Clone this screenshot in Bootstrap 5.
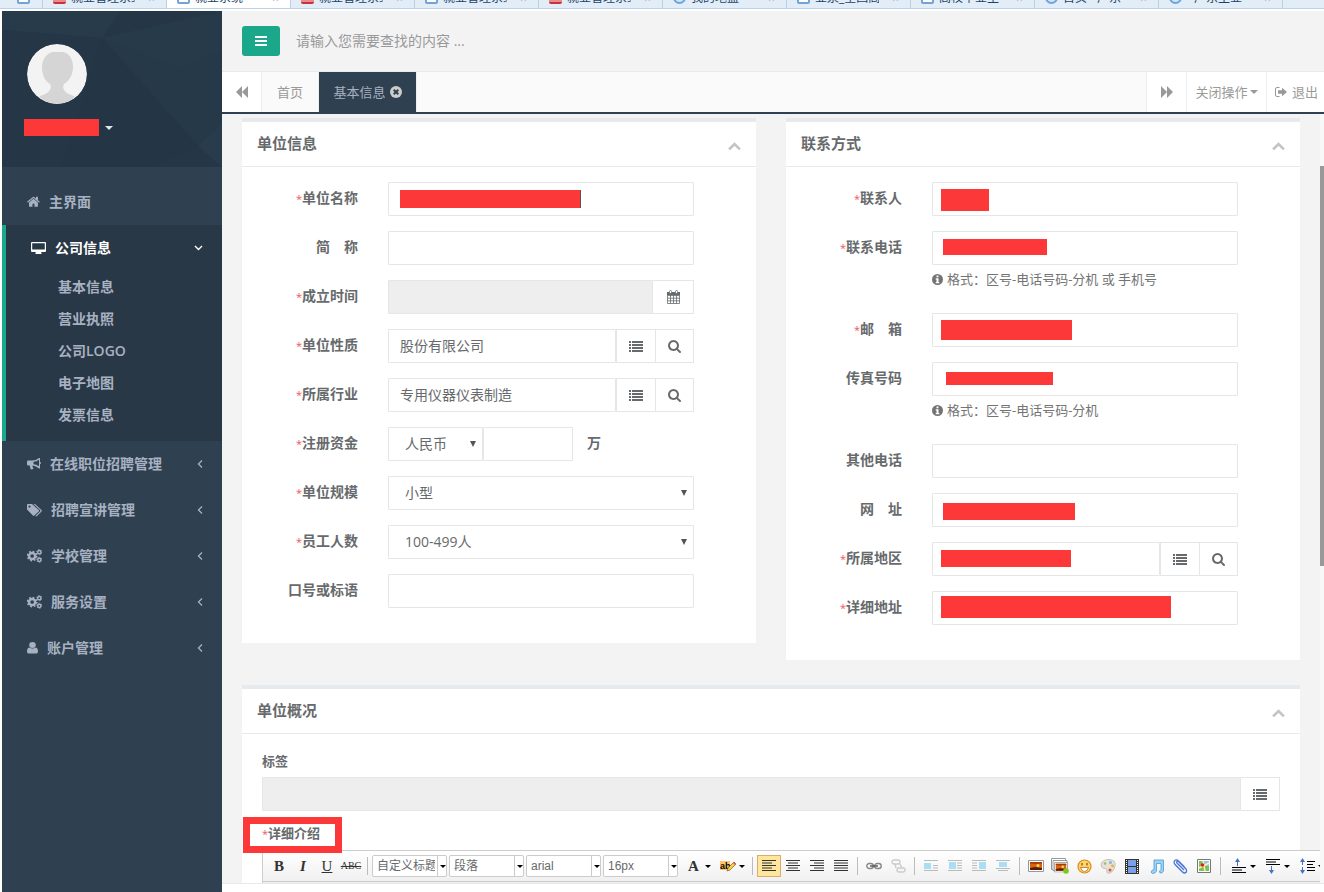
<!DOCTYPE html>
<html lang="zh-CN">
<head>
<meta charset="utf-8">
<meta name="viewport" content="width=device-width, initial-scale=1">
<title>基本信息</title>
<link href="https://cdn.jsdelivr.net/npm/bootstrap@5.3.0/dist/css/bootstrap.min.css" rel="stylesheet">
<style>
:root{--ink:#676a6c;--line:#e7eaec;--box:#e5e6e7;--navy:#2f4050;--deep:#293846;--soft:#a7b1c2;--red:#fc3938}
html,body{height:100%}
body{font:14px/20px "Open Sans","Noto Sans CJK SC",sans-serif;color:var(--ink);background:#fff;overflow:hidden}
a{color:inherit;text-decoration:none}
svg{display:block;flex:none}
.ico{fill:currentColor}
.shell{padding-left:2px}
/* browser strip */
.strip{height:9px;background:#e2edf8;border-bottom:1px solid #b9d3ec;margin-bottom:2px;color:#1c4468;font-size:12px;line-height:16px}
.strip .tabx{flex:0 0 124px;height:8px;padding:0 6px 0 10px;gap:5px;border-right:1px solid #b9cfe6}
.strip .tabx:first-child{flex-basis:43px;padding-left:17px}
.strip .tabx span{margin-bottom:2px;white-space:nowrap;overflow:hidden;width:64px;height:16px}
.strip .tabx i{flex:none;width:13px;height:10px;margin-bottom:4px;border:2px solid #6fa3da;border-radius:2px;background:#fff}
.strip .tabx i.hot{border:0;border-bottom:2px solid #c8323a;background:#e88b8b}
.strip .tabx i.ball{border-radius:7px;height:13px;background:#cfe6fa}
.strip .tabx b{font-weight:400;color:#9fbdda;margin-bottom:1px;margin-left:8px}
.strip .tabx.on{background:#fff}
/* sidebar */
.side{flex:0 0 220px;background:var(--navy);color:var(--soft);font-weight:600}
.who{height:156px;padding:33px 25px 0;background:#253746}
.who .poly{position:absolute;inset:0;width:100%;height:100%}
.who .face{position:relative;border-radius:50%}
.who .name{position:relative;margin:15px 0 0 -3px;gap:6px;padding:0;border:0;background:none;color:#dfe4ed}
.who .name span{width:75px;height:17px;background:var(--red)}
.menu{padding-top:12px}
.menu>li>a{height:46px;padding:0 19px 0 25px;gap:9px}
.menu>li.on{background:var(--deep);border-left:4px solid #19aa8d;padding-bottom:10px}
.menu>li.on>a{color:#fff}
.menu ul a{display:block;line-height:32px;padding-left:52px}
/* header */
.topbar{height:60px;background:#f3f3f4;padding:0 20px;gap:16px}
.topbar .btn{width:38px;height:30px;background:#1aa78a;color:#fff;border:0;border-radius:3px}
.topbar input{border:0;background:none;flex:1;padding:0;outline:0;color:var(--ink)}
.topbar input::placeholder{color:#999}
.pages{height:43px;background:#fafafa;border-top:1px solid var(--line);border-bottom:2px solid var(--navy);color:#999;font-size:13px}
.pages button,.pages a{border:0;border-right:1px solid #eee;background:#fff;color:inherit;height:40px;padding:0;justify-content:center}
.pages .sq{width:40px}
.pages .home{width:57px;background:#fafafa}
.pages .cur{width:98px;background:var(--navy);color:var(--soft);gap:4px}
.pages .rt{border-right:0;border-left:1px solid #eee}
.pages .ops{width:80px;gap:2px}
.pages .quit{width:58px;gap:5px;padding-left:2px}
.caret{width:0;height:0;border:4px solid transparent;border-top-color:currentColor;border-bottom:0}
/* panels */
.work{background:#f3f3f4;padding:4px 20px 0;overflow:hidden}
.rail{flex:0 0 4px;background:#f8f8f8}
.rail div{margin-top:52px;height:52%;background:#999}
.duo{--bs-gutter-x:30px}
.panel{background:#fff;border-top:4px solid var(--line);margin-bottom:25px}
.panel header{height:45px;border-bottom:1px solid var(--line);padding:0 15px}
.panel h2{font-size:15px;line-height:20px;font-weight:600;margin:0 0 2px}
.panel header button{border:0;background:none;padding:4px 0 0;color:#c4c4c4}
.panel .inner{padding:15px 20px 20px}
.panel .row{--bs-gutter-x:30px;margin-bottom:15px}
.lab{text-align:right;line-height:32px;font-weight:600;white-space:nowrap}
.star{color:#ed5565;font-weight:400;font-size:11px}
.fld{display:block;width:100%;height:34px;border:1px solid var(--box);border-radius:1px;background:#fff;color:var(--ink);padding:0 11px 2px;outline:0;font-size:14px}
.fld.off{background:#eee}
select.fld,.combo{appearance:none;-webkit-appearance:none;background:#fff url("data:image/svg+xml,%3Csvg xmlns='http://www.w3.org/2000/svg' width='6' height='6'%3E%3Cpath d='M0 0h6L3 6z' fill='%23555'/%3E%3C/svg%3E") no-repeat right 6px center}
select.fld{padding:0 16px}
.sq2{flex:none;height:34px;border:1px solid var(--box);border-left:0;background:#fff;color:var(--ink);padding:0;display:flex;align-items:center;justify-content:center;width:39px}
.sq2.near{border-left:1px solid var(--box);width:40px}
.sq2.near+.sq2{width:38px}
.sq2.cal{width:41px}
.cash{flex:0 0 95px}
.sum{flex:0 0 90px}
.unit{padding-left:14px}
.hint{font-size:13px;line-height:18px;margin:5px 0 10px;gap:4px;color:#737373;white-space:nowrap}
/* masks over private values */
.mask{position:absolute;background:var(--red);left:24px;top:7px;height:20px}
.m-firm{left:27px;width:181px;height:18px;top:8px;border-right:1px solid #555}
.m-man{width:48px;height:22px}
.m-tel{left:26px;top:8px;width:104px;height:16px}
.m-mail{width:131px}
.m-fax{left:29px;top:10px;width:107px;height:13px}
.m-web{left:26px;top:10px;width:132px;height:17px}
.m-area{width:130px;top:8px;height:17px}
.m-addr{width:230px;top:5px;height:22px}
/* overview */
.tag{font-size:13px;font-weight:600;line-height:24px;display:block;margin-bottom:4px}
.detail{font-size:13px;font-weight:600;line-height:22px;margin:11px 0 5px}
.detail .ring{position:absolute;left:-19px;top:-5px;width:99px;height:36px;border:7px solid var(--red);z-index:2;pointer-events:none}
.editor{width:max-content;border:1px solid #ccc;border-right:0;background:#eee;height:60px}
.tools{height:31px;padding:0 30px 0 4px;border-bottom:1px solid #ccc;background:linear-gradient(#fff,#f0f0f0)}
.tools button{width:24px;height:22px;padding:0;border:1px solid transparent;background:none;color:#333;justify-content:center;flex:none}
.tools button.split{width:34px;gap:3px;padding-left:2px}
.tools button.split .caret{border-width:3px;border-bottom:0;color:#000}
.tools button.on{background:#ffe69f;border-color:#dcac6c}
.tools hr{width:1px;height:18px;margin:0 4px;background:#bcbcbc;border:0;opacity:1;flex:none}
.tools .type{font:bold 15px/20px "Liberation Serif",serif}
.tools .type span{width:16px}
.tools .abc{font-size:10px;font-weight:400;text-decoration:line-through}
.combo{width:75px;height:22px;margin-right:2px;border:1px solid #ccc;border-radius:2px;padding:0 11px 0 4px;color:var(--ink);font:12px/20px "Liberation Sans","Noto Sans CJK SC",sans-serif;outline:0;background-image:url("data:image/svg+xml,%3Csvg xmlns='http://www.w3.org/2000/svg' width='9' height='20'%3E%3Cpath d='M0 0h1v20H0z' fill='%23ccc'/%3E%3Cpath d='M3 9h6l-3 3z'/%3E%3C/svg%3E");background-position:right center}
.foot{height:9px;border-top:1px solid var(--line);background:#fff}
</style>
</head>
<body class="d-flex flex-column">
<svg width="0" height="0" class="position-absolute" aria-hidden="true">
<symbol id="search" viewBox="60 120 1672 1672"><path d="M1216 832q0-185-131.500-316.500t-316.500-131.500-316.500 131.500-131.500 316.500 131.500 316.500 316.500 131.500 316.500-131.500 131.500-316.500zm512 832q0 52-38 90t-90 38q-54 0-90-38l-343-342q-179 124-399 124-143 0-273.500-55.500t-225-150-150-225-55.500-273.500 55.500-273.500 150-225 225-150 273.500-55.500 273.500 55.500 225 150 150 225 55.500 273.500q0 220-124 399l343 343q37 37 37 90z"/></symbol>
<symbol id="list" viewBox="0 0 14 11"><path d="M0 0h2v2H0zM3 0h11v2H3zM0 3h2v2H0zM3 3h11v2H3zM0 6h2v2H0zM3 6h11v2H3zM0 9h2v2H0zM3 9h11v2H3z"/></symbol>
<symbol id="cogs" viewBox="0 .2 14.600 13.600"><g fill="none" stroke="currentColor"><circle cx="5" cy="7" r="3" stroke-width="2.400"/><circle cx="5" cy="7" r="4.500" stroke-width="1.500" stroke-dasharray="1.760 1.760"/><circle cx="12" cy="3.300" r="1.600" stroke-width="1.400"/><circle cx="12" cy="3.300" r="2.500" stroke-width=".9" stroke-dasharray="1.300 1.300"/><circle cx="12" cy="10.700" r="1.600" stroke-width="1.400"/><circle cx="12" cy="10.700" r="2.500" stroke-width=".9" stroke-dasharray="1.300 1.300"/></g></symbol>
<symbol id="left" viewBox="0 0 6 10"><path d="M5 1.500 1.500 5 5 8.500" fill="none" stroke="currentColor" stroke-width="1.300"/></symbol>
<symbol id="up" viewBox="0 0 12 8"><path d="M1 6.700 6 1.700l5 5" fill="none" stroke="currentColor" stroke-width="2.400"/></symbol>
<symbol id="info" viewBox=".5 .5 11 11"><path fill-rule="evenodd" d="M6 .5a5.500 5.500 0 1 0 0 11 5.500 5.500 0 0 0 0-11zM5 2h2v1.800H5zM4.200 4.800H7v3.700h.8v1.200H4.200V8.500H5V6h-.8z"/></symbol>
<symbol id="pic" viewBox="0 0 16 12"><path d="M.5.500h15v11H.5z" fill="#fff" stroke="#999"/><path d="M2 2h12v8H2z" fill="#d9640f"/><path d="M2 2h12v1.500L8 4 2 3.500z" fill="#a63c0a"/><path d="m2 8 5-1 7 1v2H2z" fill="#5a1c06"/><circle cx="10" cy="5.500" r="1.500" fill="#ffd65a"/></symbol>
</svg>

<div class="strip d-flex overflow-hidden flex-shrink-0" aria-hidden="true">
<div class="tabx d-flex align-items-end"><i></i></div>
<div class="tabx d-flex align-items-end"><i class="hot"></i><span>就业管理系统</span><b>×</b></div>
<div class="tabx on d-flex align-items-end"><i></i><span>就业系统</span><b>×</b></div>
<div class="tabx d-flex align-items-end"><i class="hot"></i><span>就业管理系统</span><b>×</b></div>
<div class="tabx d-flex align-items-end"><i></i><span>就业管理系统</span><b>×</b></div>
<div class="tabx d-flex align-items-end"><i class="hot"></i><span>就业管理系统</span><b>×</b></div>
<div class="tabx d-flex align-items-end"><i class="ball"></i><span>我的地盘</span><b>×</b></div>
<div class="tabx d-flex align-items-end"><i></i><span>业泉_全国高</span><b>×</b></div>
<div class="tabx d-flex align-items-end"><i></i><span>高校毕业生</span><b>×</b></div>
<div class="tabx d-flex align-items-end"><i class="ball"></i><span>首页 - 广东</span><b>×</b></div>
<div class="tabx d-flex align-items-end"><i class="ball"></i><span>- 广东生业</span><b>×</b></div>
</div>

<div class="shell d-flex flex-grow-1 overflow-hidden">
<aside class="side">
<div class="who position-relative overflow-hidden">
<svg class="poly" viewBox="0 0 220 156" preserveAspectRatio="none"><path d="M0 0h220v156H0z" fill="#253747"/><path d="M0 19 100 27 118 0H0z" fill="#283b4b"/><path d="M100 27 220 0v40l-42 18z" fill="#273a4a"/><path d="M100 27 196 135 220 156V40l-42 18z" fill="#263949"/><path d="M0 19 100 27 60 156H0z" fill="#253747"/><path d="m100 27 96 108-50 21H60z" fill="#243646"/><path d="m196 135 24-22v43z" fill="#293c4c"/></svg>
<svg class="face" width="60" height="60" viewBox="0 0 60 60"><circle cx="30" cy="30" r="30" fill="#f3f3f3"/><path d="M30 8h-5c-6 2-10 8-10 15 0 8 3 14 8 17 2 4 0 7-3 9-3 2-6 2-8 4 10 9 26 9 36 0-2-2-5-2-8-4-3-2-5-5-3-9 6-4 9-10 9-17 0-7-3-13-9-15z" fill="#d5d5d5"/></svg>
<button class="name d-flex align-items-center" type="button" aria-label="账户"><span></span><i class="caret"></i></button>
</div>
<ul class="menu list-unstyled mb-0">
<li><a href="#" class="d-flex align-items-center"><svg class="ico" width="13" height="12" viewBox="60 240 1680 1380"><path d="M1472 992v480q0 26-19 45t-45 19h-384v-384h-256v384h-384q-26 0-45-19t-19-45v-480l576-477 575 474zm223-69-62 74q-8 9-21 11h-3q-13 0-21-7l-692-577-692 577q-12 8-24 7-13-2-21-11l-62-74q-8-10-7-23t11-22l719-599q32-26 76-26t76 26l244 204v-195q0-14 9-23t23-9h192q14 0 23 9t9 23v408l219 182q10 8 11 22t-7 23z"/></svg>主界面</a></li>
<li class="on"><a href="#" class="d-flex align-items-center"><svg class="ico" width="15" height="12" viewBox="0 0 15 12"><path fill-rule="evenodd" d="M1 0h13q1 0 1 1v8q0 1-1 1h-4l.6 1.200V12H4.400v-.8L5 10H1q-1 0-1-1V1q0-1 1-1zm.2 1.200v6.300h12.600V1.200z"/></svg>公司信息<svg class="ms-auto" width="9" height="6" viewBox="0 0 9 6"><path d="m1 1 3.500 3.500L8 1" fill="none" stroke="#fff" stroke-width="1.400"/></svg></a>
<ul class="list-unstyled"><li><a href="#">基本信息</a></li><li><a href="#">营业执照</a></li><li><a href="#">公司LOGO</a></li><li><a href="#">电子地图</a></li><li><a href="#">发票信息</a></li></ul></li>
<li><a href="#" class="d-flex align-items-center"><svg class="ico" width="14" height="12" viewBox="0 0 14 12"><path fill-rule="evenodd" d="M12 0h1v4q1 0 1 1t-1 1v4.500h-1Q9 7.800 5.700 7.500q-.7 1.500.7 2.500l-.2.800q-1.200 1-2.700.3L2.700 7.500H1.300Q0 7.500 0 6.200V3.800Q0 2.500 1.300 2.500H5Q9 2.500 12 0zm0 1.700Q9.500 3.500 6.500 3.700v2.600q3 .2 5.500 2z"/></svg>在线职位招聘管理<svg class="ms-auto" width="6" height="10"><use href="#left"/></svg></a></li>
<li><a href="#" class="d-flex align-items-center"><svg class="ico" width="15" height="13" viewBox="0 0 15 13"><path fill-rule="evenodd" d="M0 1q0-1 1-1h4l6.700 6q.7.700 0 1.400l-4.400 4.200q-.7.700-1.400 0L0 5.500zM2.500 1.500a1.100 1.100 0 1 0 0 2.200 1.100 1.100 0 0 0 0-2.200z"/><path d="M6.500 0H8l6.500 6q.7.700 0 1.400L10 12q-.8.800-1.700.1l4.900-4.900q.5-.5 0-1z"/></svg>招聘宣讲管理<svg class="ms-auto" width="6" height="10"><use href="#left"/></svg></a></li>
<li><a href="#" class="d-flex align-items-center"><svg width="15" height="14"><use href="#cogs"/></svg>学校管理<svg class="ms-auto" width="6" height="10"><use href="#left"/></svg></a></li>
<li><a href="#" class="d-flex align-items-center"><svg width="15" height="14"><use href="#cogs"/></svg>服务设置<svg class="ms-auto" width="6" height="10"><use href="#left"/></svg></a></li>
<li><a href="#" class="d-flex align-items-center"><svg class="ico" width="11" height="12" viewBox="0 0 10 12" preserveAspectRatio="none"><circle cx="5" cy="3" r="3"/><path d="M2 5.500q3 2 6 0 2 .5 2 4 0 2-1.500 2h-7Q0 11.500 0 9.500q0-3.500 2-4z"/></svg>账户管理<svg class="ms-auto" width="6" height="10"><use href="#left"/></svg></a></li>
</ul>
</aside>

<div class="d-flex flex-column flex-grow-1 overflow-hidden">
<div class="topbar d-flex align-items-center flex-shrink-0">
<button class="btn p-0 d-flex align-items-center justify-content-center" type="button" aria-label="菜单"><svg class="ico" width="12" height="10" viewBox="0 0 12 10"><path d="M0 0h12v2H0zM0 4h12v2H0zM0 8h12v2H0z"/></svg></button>
<input type="text" placeholder="请输入您需要查找的内容 ..." aria-label="搜索">
</div>
<nav class="pages d-flex flex-shrink-0">
<button class="sq d-flex align-items-center" type="button" aria-label="向左"><svg class="ico" width="12" height="12" viewBox="0 0 12 12"><path d="M6 0v12L0 6zM12 0v12L6 6z"/></svg></button>
<a href="#" class="home d-flex align-items-center">首页</a>
<a href="#" class="cur d-flex align-items-center">基本信息<svg class="ico" width="12" height="12" viewBox="0 0 12 12"><circle cx="6" cy="6" r="6" fill="#ccc"/><path d="m3.700 3.700 4.600 4.600m0-4.600L3.700 8.300" stroke="#2f4050" stroke-width="2"/></svg></a>
<button class="sq rt ms-auto d-flex align-items-center" type="button" aria-label="向右"><svg class="ico" width="12" height="12" viewBox="0 0 12 12"><path d="m0 0 6 6-6 6zM6 0l6 6-6 6z"/></svg></button>
<button class="rt ops d-flex align-items-center" type="button">关闭操作<i class="caret"></i></button>
<a href="#" class="rt quit d-flex align-items-center"><svg class="ico" width="12" height="10" viewBox="0 0 12 10"><path d="M4.500.500H2Q.5.500.5 2v6q0 1.500 1.500 1.500h2.500" fill="none" stroke="currentColor"/><path d="M3 3.200h4V.8L12 5 7 9.200V6.800H3z"/></svg>退出</a>
</nav>

<div class="d-flex flex-grow-1 overflow-hidden">
<main class="work flex-grow-1">
<div class="row duo align-items-start">
<div class="col-6"><section class="panel">
<header class="d-flex align-items-center justify-content-between"><h2>单位信息</h2><button type="button" aria-label="收起"><svg width="13" height="9"><use href="#up"/></svg></button></header>
<div class="inner">
<div class="row"><label class="col-3 lab" for="f1"><span class="star">*</span>单位名称</label><div class="col-8 position-relative"><input class="fld" id="f1"><span class="mask m-firm"></span></div></div>
<div class="row"><label class="col-3 lab" for="f2">简　称</label><div class="col-8"><input class="fld" id="f2"></div></div>
<div class="row"><label class="col-3 lab" for="f3"><span class="star">*</span>成立时间</label><div class="col-8 d-flex"><input class="fld off" id="f3" readonly><button class="sq2 cal" type="button" aria-label="选择日期"><svg width="13" height="14" viewBox="0 0 13 14"><path d="M.5 2.500h12v11H.5zM.5 5.500h12M.5 8.200h12M.5 10.800h12M3.500 5v8.500M6.500 5v8.500M9.500 5v8.500" fill="none" stroke="currentColor" stroke-width=".8"/><path d="M0 2h13v3H0z" fill="currentColor"/><rect x="2.500" y=".5" width="2" height="3" rx="1" fill="#fff" stroke="currentColor" stroke-width=".8"/><rect x="8.500" y=".5" width="2" height="3" rx="1" fill="#fff" stroke="currentColor" stroke-width=".8"/></svg></button></div></div>
<div class="row"><label class="col-3 lab" for="f4"><span class="star">*</span>单位性质</label><div class="col-8 d-flex"><input class="fld" id="f4" value="股份有限公司"><button class="sq2 near" type="button" aria-label="列表"><svg class="ico" width="14" height="11"><use href="#list"/></svg></button><button class="sq2" type="button" aria-label="查找"><svg class="ico" width="13" height="13"><use href="#search"/></svg></button></div></div>
<div class="row"><label class="col-3 lab" for="f5"><span class="star">*</span>所属行业</label><div class="col-8 d-flex"><input class="fld" id="f5" value="专用仪器仪表制造"><button class="sq2 near" type="button" aria-label="列表"><svg class="ico" width="14" height="11"><use href="#list"/></svg></button><button class="sq2" type="button" aria-label="查找"><svg class="ico" width="13" height="13"><use href="#search"/></svg></button></div></div>
<div class="row"><label class="col-3 lab" for="f6"><span class="star">*</span>注册资金</label><div class="col-8 d-flex"><select class="fld cash" id="f6"><option>人民币</option></select><input class="fld sum" aria-label="金额"><span class="lab unit">万</span></div></div>
<div class="row"><label class="col-3 lab" for="f7"><span class="star">*</span>单位规模</label><div class="col-8"><select class="fld" id="f7"><option>小型</option></select></div></div>
<div class="row"><label class="col-3 lab" for="f8"><span class="star">*</span>员工人数</label><div class="col-8"><select class="fld" id="f8"><option>100-499人</option></select></div></div>
<div class="row"><label class="col-3 lab" for="f9">口号或标语</label><div class="col-8"><input class="fld" id="f9"></div></div>
</div></section></div>

<div class="col-6"><section class="panel">
<header class="d-flex align-items-center justify-content-between"><h2>联系方式</h2><button type="button" aria-label="收起"><svg width="13" height="9"><use href="#up"/></svg></button></header>
<div class="inner">
<div class="row"><label class="col-3 lab" for="g1"><span class="star">*</span>联系人</label><div class="col-8 position-relative"><input class="fld" id="g1"><span class="mask m-man"></span></div></div>
<div class="row"><label class="col-3 lab" for="g2"><span class="star">*</span>联系电话</label><div class="col-8 position-relative"><input class="fld" id="g2"><span class="mask m-tel"></span><div class="hint d-flex align-items-center"><svg class="ico" width="11" height="11"><use href="#info"/></svg>格式：区号-电话号码-分机 或 手机号</div></div></div>
<div class="row"><label class="col-3 lab" for="g3"><span class="star">*</span>邮　箱</label><div class="col-8 position-relative"><input class="fld" id="g3"><span class="mask m-mail"></span></div></div>
<div class="row"><label class="col-3 lab" for="g4">传真号码</label><div class="col-8 position-relative"><input class="fld" id="g4"><span class="mask m-fax"></span><div class="hint d-flex align-items-center"><svg class="ico" width="11" height="11"><use href="#info"/></svg>格式：区号-电话号码-分机</div></div></div>
<div class="row"><label class="col-3 lab" for="g5">其他电话</label><div class="col-8"><input class="fld" id="g5"></div></div>
<div class="row"><label class="col-3 lab" for="g6">网　址</label><div class="col-8 position-relative"><input class="fld" id="g6"><span class="mask m-web"></span></div></div>
<div class="row"><label class="col-3 lab" for="g7"><span class="star">*</span>所属地区</label><div class="col-8 d-flex position-relative"><input class="fld" id="g7"><button class="sq2 near" type="button" aria-label="列表"><svg class="ico" width="14" height="11"><use href="#list"/></svg></button><button class="sq2" type="button" aria-label="查找"><svg class="ico" width="13" height="13"><use href="#search"/></svg></button><span class="mask m-area"></span></div></div>
<div class="row"><label class="col-3 lab" for="g8"><span class="star">*</span>详细地址</label><div class="col-8 position-relative"><input class="fld" id="g8"><span class="mask m-addr"></span></div></div>
</div></section></div>
</div>

<section class="panel">
<header class="d-flex align-items-center justify-content-between"><h2>单位概况</h2><button type="button" aria-label="收起"><svg width="13" height="9"><use href="#up"/></svg></button></header>
<div class="inner">
<label class="tag" for="h1">标签</label>
<div class="d-flex"><input class="fld off" id="h1" readonly><button class="sq2" type="button" aria-label="列表"><svg class="ico" width="14" height="11"><use href="#list"/></svg></button></div>
<div class="detail position-relative"><span class="star">*</span>详细介绍<span class="ring"></span></div>
<div class="editor">
<div class="tools d-flex align-items-center">
<button class="type" type="button">B</button><button class="type fst-italic" type="button">I</button><button class="type fw-normal text-decoration-underline" type="button">U</button><button class="type abc" type="button">ABC</button><hr>
<select class="combo" aria-label="标题"><option>自定义标题</option></select><select class="combo" aria-label="段落"><option>段落</option></select><select class="combo" aria-label="字体"><option>arial</option></select><select class="combo" aria-label="字号"><option>16px</option></select>
<button class="split type d-flex align-items-center" type="button"><span>A</span><i class="caret"></i></button>
<button class="split d-flex align-items-center" type="button" aria-label="背景色"><svg width="16" height="14" viewBox="0 0 16 14"><path d="M0 2h10v9H0z" fill="#ffc66e"/><text x="0" y="9.500" font-family="Liberation Sans" font-weight="700" font-size="9">ab</text><path d="m7 12 1-3 6-6 2 2-6 6z" fill="#f3cf4e" stroke="#8a5a20" stroke-width=".7"/><path d="m13 4 1-1 2 2-1 1z" fill="#e0554d"/></svg><i class="caret"></i></button><hr>
<button class="on d-flex align-items-center" type="button" aria-label="左对齐"><svg width="14" height="12"><path d="M0 .5h14M0 3h10M0 5.500h14M0 8h10M0 10.500h14" stroke="#333"/></svg></button>
<button class="d-flex align-items-center" type="button" aria-label="居中"><svg width="14" height="12"><path d="M0 .5h14M2 3h10M0 5.500h14M2 8h10M0 10.500h14" stroke="#333"/></svg></button>
<button class="d-flex align-items-center" type="button" aria-label="右对齐"><svg width="14" height="12"><path d="M0 .5h14M4 3h10M0 5.500h14M4 8h10M0 10.500h14" stroke="#333"/></svg></button>
<button class="d-flex align-items-center" type="button" aria-label="两端对齐"><svg width="14" height="12"><path d="M0 .5h14M0 3h14M0 5.500h14M0 8h14M0 10.500h14" stroke="#333"/></svg></button><hr>
<button class="d-flex align-items-center" type="button" aria-label="链接"><svg width="16" height="8" viewBox="0 0 16 8" fill="none" stroke="#888" stroke-width="1.400"><rect x=".8" y="1.500" width="6.500" height="5" rx="2.500"/><rect x="8.700" y="1.500" width="6.500" height="5" rx="2.500"/><path d="M4 4h8" stroke="#555"/></svg></button>
<button class="d-flex align-items-center" type="button" aria-label="取消链接"><svg width="15" height="14" viewBox="0 0 15 14" fill="none" stroke="#ccc" stroke-width="1.400"><rect x="1" y="1" width="8" height="4" rx="2"/><rect x="6" y="9" width="8" height="4" rx="2"/><path d="m4 5 1 4m4-4 2 4"/></svg></button><hr>
<button class="d-flex align-items-center" type="button" aria-label="左浮动"><svg width="14" height="12"><path d="M0 .5h14M9 5.500h5M9 8h5M0 10.500h14" stroke="#bbb"/><path d="M0 3h7v6H0z" fill="#a9def5"/></svg></button>
<button class="d-flex align-items-center" type="button" aria-label="图居左"><svg width="14" height="12"><path d="M0 .5h14M9 3h5M9 5.500h5M9 8h5M0 10.500h14" stroke="#bbb"/><path d="M1 2h7v7H1z" fill="#a9def5"/></svg></button>
<button class="d-flex align-items-center" type="button" aria-label="图居右"><svg width="14" height="12"><path d="M0 .5h14M0 3h5M0 5.500h5M0 8h5M0 10.500h14" stroke="#bbb"/><path d="M7 2h7v7H7z" fill="#a9def5"/></svg></button>
<button class="d-flex align-items-center" type="button" aria-label="图居中"><svg width="14" height="12"><path d="M0 .5h14M0 8.500h14M2 10.500h10" stroke="#bbb"/><path d="M3 2h8v5H3z" fill="#a9def5"/></svg></button><hr>
<button class="d-flex align-items-center" type="button" aria-label="图片"><svg width="16" height="12"><use href="#pic"/></svg></button>
<button class="d-flex align-items-center" type="button" aria-label="多图"><svg width="18" height="16" viewBox="0 0 18 16"><path d="M.5.500h14v11H.5z" fill="#fff" stroke="#999"/><path d="M2 2.500h14v10H2z" fill="#fff" stroke="#999"/><use href="#pic" x="3" y="4" width="14" height="10.500"/><circle cx="15" cy="13" r="2.800" fill="#7ec81e"/></svg></button>
<button class="d-flex align-items-center" type="button" aria-label="表情"><svg width="15" height="15" viewBox="0 0 15 15"><circle cx="7.500" cy="7.500" r="6.500" fill="#ffd66b" stroke="#dd8a1c" stroke-width="1.200"/><path d="M5 4v2.500M10 4v2.500" stroke="#9a5c18" stroke-width="1.400"/><path d="M3.500 8.500h8q-1 4-4 4t-4-4z" fill="#fff" stroke="#b56d1a" stroke-width=".8"/></svg></button>
<button class="d-flex align-items-center" type="button" aria-label="涂鸦"><svg width="16" height="15" viewBox="0 0 16 15"><path d="M1 5q2-5 9-4.500 6 1 5 6-1 7-7 8-2-1-1-4-1-1.500-3-1Q1 9 1 5z" fill="#e8e2d6" stroke="#bdb5a5" stroke-width=".8"/><circle cx="5" cy="4.500" r="1.300" fill="#98bf61"/><circle cx="10.500" cy="3.500" r="1.500" fill="#74bfe2"/><circle cx="12.500" cy="7" r="1.400" fill="#e2b343"/><circle cx="10" cy="11" r="1.500" fill="#c9594b"/></svg></button>
<button class="d-flex align-items-center" type="button" aria-label="视频"><svg width="14" height="15" viewBox="0 0 14 15"><path d="M0 0h14v15H0z" fill="#333"/><path d="M3 1h8v6H3zM3 8h8v6H3z" fill="#7ba0ea"/><path d="M1.500 1v14M12.500 1v14" stroke="#fff" stroke-dasharray="1 1"/></svg></button>
<button class="d-flex align-items-center" type="button" aria-label="音乐"><svg width="15" height="15" viewBox="0 0 15 15"><path d="M5 1h9.500v11q-1 2.500-3.500 2-1.500-2 1-3.500V4.500H7.500V12q-1 2.500-4 2.500-3-1 0-3.500L5 10.500z" fill="#9ad3f5" stroke="#4b9bd0" stroke-width=".8"/></svg></button>
<button class="d-flex align-items-center" type="button" aria-label="附件"><svg width="15" height="15" viewBox="0 0 15 15"><path d="M11 11 4 4q-1-2 1-2l8 8q1.500 3-1 4-1.500 0-2.500-1L2 5.500Q0 2.500 2.500 1 4 .5 5.500 2l6 6" fill="none" stroke="#4a76d4" stroke-width="1.300"/></svg></button>
<button class="d-flex align-items-center" type="button" aria-label="地图"><svg width="14" height="14" viewBox="0 0 14 14"><path d="M.5.500h13v13H.5z" fill="#fff" stroke="#777"/><path d="M2 2h10v10H2z" fill="#7fbf5c"/><path d="M7 2h5v5H7z" fill="#8ec9ec"/><path d="m2 9 10-5M6 2l2 10" stroke="#fff3b0" stroke-width="1.400"/><circle cx="5.500" cy="6" r="1.800" fill="#d22"/></svg></button><hr>
<button class="split d-flex align-items-center" type="button" aria-label="段前距"><svg width="16" height="16" viewBox="0 0 16 16"><path d="M1 9.500h14M1 12h10M1 14.500h14" stroke="#000"/><path d="M6.500 8V3" stroke="#4a6fc8"/><path d="m6.500 0 2.500 4H4z" fill="#4a6fc8"/></svg><i class="caret"></i></button>
<button class="split d-flex align-items-center" type="button" aria-label="段后距"><svg width="16" height="16" viewBox="0 0 16 16"><path d="M1 1.500h14M1 4h10M1 6.500h14" stroke="#000"/><path d="M6.500 8v4" stroke="#4a6fc8"/><path d="m6.500 16 2.500-4H4z" fill="#4a6fc8"/></svg><i class="caret"></i></button>
<button class="split d-flex align-items-center" type="button" aria-label="行间距"><svg width="16" height="16" viewBox="0 0 16 16"><path d="M8 3.500h8M8 6.500h6M8 9.500h8M8 12.500h8" stroke="#000"/><path d="M3.500 3v10" stroke="#4a6fc8" stroke-dasharray="4 2"/><path d="M3.500 0 6 4H1zM3.500 16 6 12H1z" fill="#4a6fc8"/></svg><i class="caret"></i></button>
</div>
</div>
</div>
</section>
</main>
<div class="rail"><div></div></div>
</div>
<footer class="foot flex-shrink-0"></footer>
</div>
</div>
<script src="https://cdn.jsdelivr.net/npm/bootstrap@5.3.0/dist/js/bootstrap.bundle.min.js"></script>
</body>
</html>
